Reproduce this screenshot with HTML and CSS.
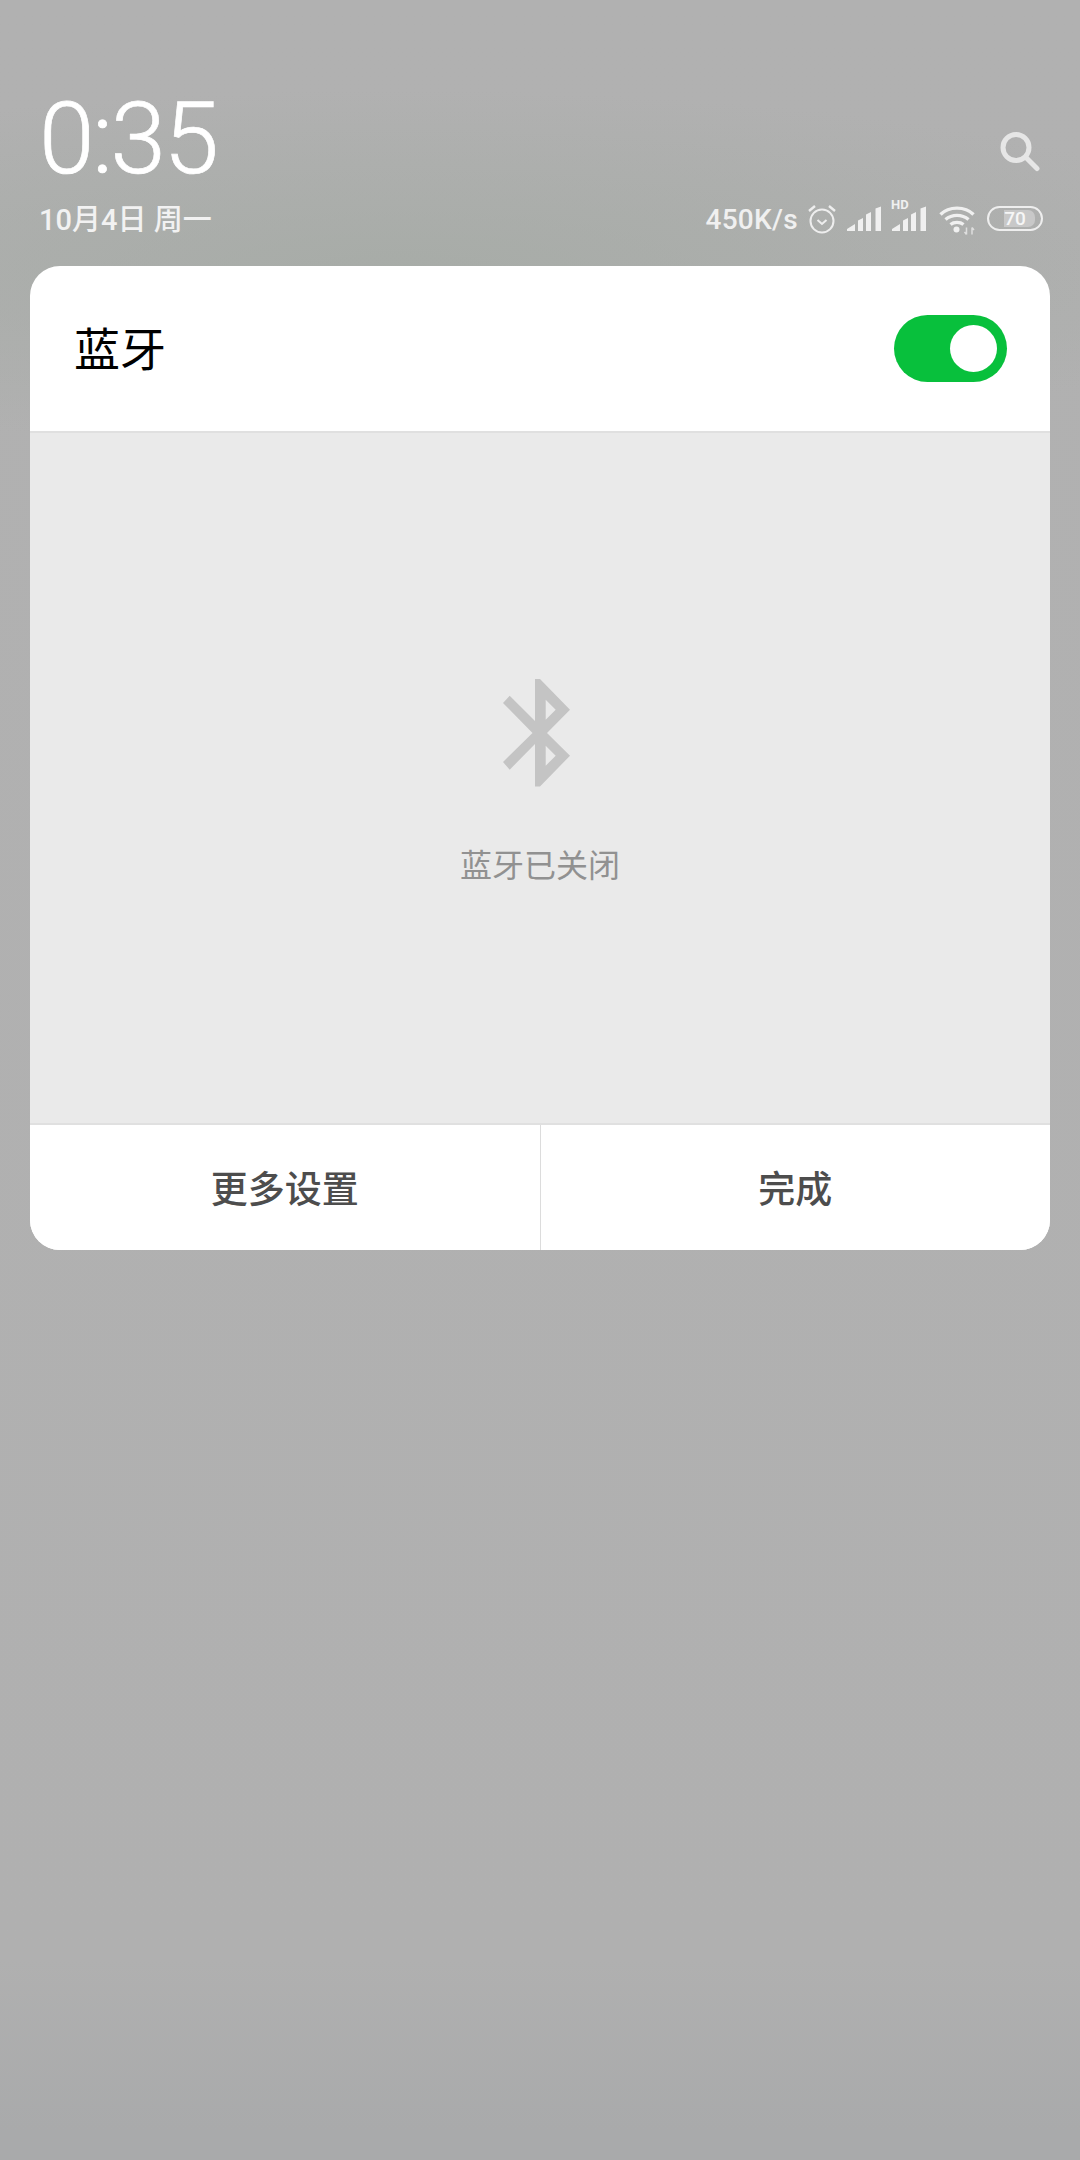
FILE: index.html
```html
<!DOCTYPE html>
<html lang="zh-CN">
<head>
<meta charset="utf-8">
<title>蓝牙</title>
<link rel="stylesheet" href="styles.css">
</head>
<body>
<div class="screen">
  <header class="top">
    <div class="clock-row">
      <div class="clock">0:35</div>
      <svg class="search" viewBox="0 0 40 40" width="40" height="40"><circle cx="16" cy="15.500" r="13" fill="none" stroke="#e6e6e6" stroke-width="5"/><path d="M26 25.500L37 36.500" stroke="#e6e6e6" stroke-width="5" stroke-linecap="round"/></svg>
    </div>
    <div class="status-row">
      <div class="date">10月4日 周一</div>
      <div class="status">
        <span class="speed">450K/s</span>
        <svg class="ic-alarm" viewBox="0 0 28 30" width="28" height="30"><circle cx="14" cy="17" r="11.500" fill="none" stroke="#eee" stroke-width="2"/><path d="M9.500 16l4.500 4 4.500-4" fill="none" stroke="#eee" stroke-width="2"/><path d="M1 7l6-5M27 7l-6-5" stroke="#eee" stroke-width="2.400"/></svg>
        <svg class="ic-signal" viewBox="0 0 34 26" width="34" height="26"><path d="M0 25v-2l8-5v7zM11 25V14.500l5-2.500v13zM19 25V8.500l5-2.500V25zM28.500 25V2.500L34 .5V25z" fill="#f0f0f0"/></svg>
        <span class="hd-signal">
          <span class="hd">HD</span>
          <svg class="ic-signal" viewBox="0 0 34 26" width="34" height="26"><path d="M0 25v-2l8-5v7zM11 25V14.500l5-2.500v13zM19 25V8.500l5-2.500V25zM28.500 25V2.500L34 .5V25z" fill="#f0f0f0"/></svg>
        </span>
        <svg class="ic-wifi" viewBox="0 0 36 30" width="36" height="30"><path d="M1.500 9.500C10 1 26 1 34.500 9.500M6.500 14.500c6.500-5.500 16.500-5.500 23 0M11.500 19.500c3.500-2.800 9.500-2.800 13 0" fill="none" stroke="#f0f0f0" stroke-width="3.400"/><circle cx="17.500" cy="24.500" r="3" fill="#f0f0f0"/><path d="M27.500 29.500v-7M25.500 27l2 2.500M33 22.500v7M35 25l-2-2.500" fill="none" stroke="#dedede" stroke-width="1.500"/></svg>
        <span class="battery"><span class="battery-fill"></span><span class="battery-num">70</span></span>
      </div>
    </div>
  </header>

  <section class="card">
    <div class="card-head">
      <h1 class="title">蓝牙</h1>
      <span class="toggle"><span class="knob"></span></span>
    </div>
    <div class="card-body">
      <svg class="bt" viewBox="0 0 68 108" width="68" height="108"><path d="M32 0H37L67 30.700 44 54 67 76.700 37 107.500H32V65L6.700 90.700 0 83 29.500 54 0 24 6.700 16.700 32 42zM42.700 20.700V40.700L52.700 30.700zM42.700 66.700V86.700L52.700 76.700z" fill="#c4c4c4" fill-rule="evenodd"/></svg>
      <p class="off">蓝牙已关闭</p>
    </div>
    <div class="card-foot">
      <button class="btn">更多设置</button>
      <button class="btn">完成</button>
    </div>
  </section>
</div>
</body>
</html>
```

FILE: styles.css
```css
* { box-sizing: border-box; }
html, body { margin: 0; padding: 0; }
body {
  width: 1080px;
  height: 2160px;
  overflow: hidden;
  font-family: Roboto, "Noto Sans CJK SC", sans-serif;
}
.screen {
  height: 2160px;
  padding: 0 30px;
  background:
    radial-gradient(ellipse 900px 180px at 400px 270px, rgba(164,170,164,.75), rgba(164,170,164,0)),
    linear-gradient(#b1b1b1 0, #b0b0b0 1960px, #a9aaab 2130px);
}
.top { height: 266px; padding-top: 91px; }
.clock-row { display: flex; justify-content: space-between; align-items: flex-end; height: 96px; padding-right: 10px; }
.clock {
  font-size: 100px;
  font-weight: 300;
  line-height: 96px;
  color: #fff;
  margin-left: 9px;
  letter-spacing: -2.500px;
  -webkit-text-stroke: 0.700px #fff;
}
.search { margin-bottom: 15px; }
.status-row { display: flex; justify-content: space-between; align-items: center; height: 40px; margin-top: 11px; }
.date { font-size: 29px; font-weight: 500; color: #f2f2f2; margin-left: 9px; margin-top: -2px; }
.status { display: flex; align-items: center; gap: 10px; padding-right: 7px; margin-top: 1px; }
.speed { font-size: 28px; font-weight: 500; color: #f0f0f0; margin-top: 1px; letter-spacing: .3px; }
.ic-signal { margin-left: 1px; }
.ic-wifi { margin-left: 3px; margin-top: 2px; }
.hd-signal { position: relative; display: flex; }
.hd { position: absolute; left: 0; top: -9px; font-size: 13px; font-weight: 700; color: #f0f0f0; }
.battery {
  position: relative;
  width: 56px;
  height: 25px;
  margin-left: 2px;
  border: 2.500px solid #eee;
  border-radius: 13px;
  display: flex;
  align-items: center;
  justify-content: center;
}
.battery-fill { position: absolute; left: 15px; top: 2px; bottom: 2px; width: 31px; background: #c8c8c8; border-radius: 0 7px 7px 0; }
.battery-num { position: relative; font-size: 19px; font-weight: 500; color: #f6f6f6; }
.card {
  width: 1020px;
  height: 984px;
  border-radius: 30px;
  overflow: hidden;
  background: #fff;
  display: flex;
  flex-direction: column;
}
.card-head {
  height: 167px;
  border-bottom: 2px solid #e0e0e0;
  display: flex;
  align-items: center;
  justify-content: space-between;
  padding: 0 43px 0 44px;
}
.title { margin: 0; padding-bottom: 6px; font-size: 46px; font-weight: 400; color: #000; }
.toggle { width: 113px; height: 67px; border-radius: 34px; background: #08c03c; position: relative; display: block; }
.knob { position: absolute; right: 10px; top: 10px; width: 47px; height: 47px; border-radius: 50%; background: #fff; }
.card-body {
  flex: 1;
  background: #eaeaea;
  display: flex;
  flex-direction: column;
  align-items: center;
  padding-top: 246px;
}
.bt { margin-left: -6px; display: block; }
.off { margin: 59px 0 0; font-size: 32px; line-height: 40px; color: #919191; }
.card-foot { height: 127px; border-top: 2px solid #e0e0e0; display: flex; }
.btn {
  flex: 1;
  border: 0;
  background: #fff;
  font-family: inherit;
  font-size: 37px;
  font-weight: 500;
  color: #4d4d4d;
  padding: 0 0 2px;
}
.btn + .btn { border-left: 1px solid #dcdcdc; }
```
